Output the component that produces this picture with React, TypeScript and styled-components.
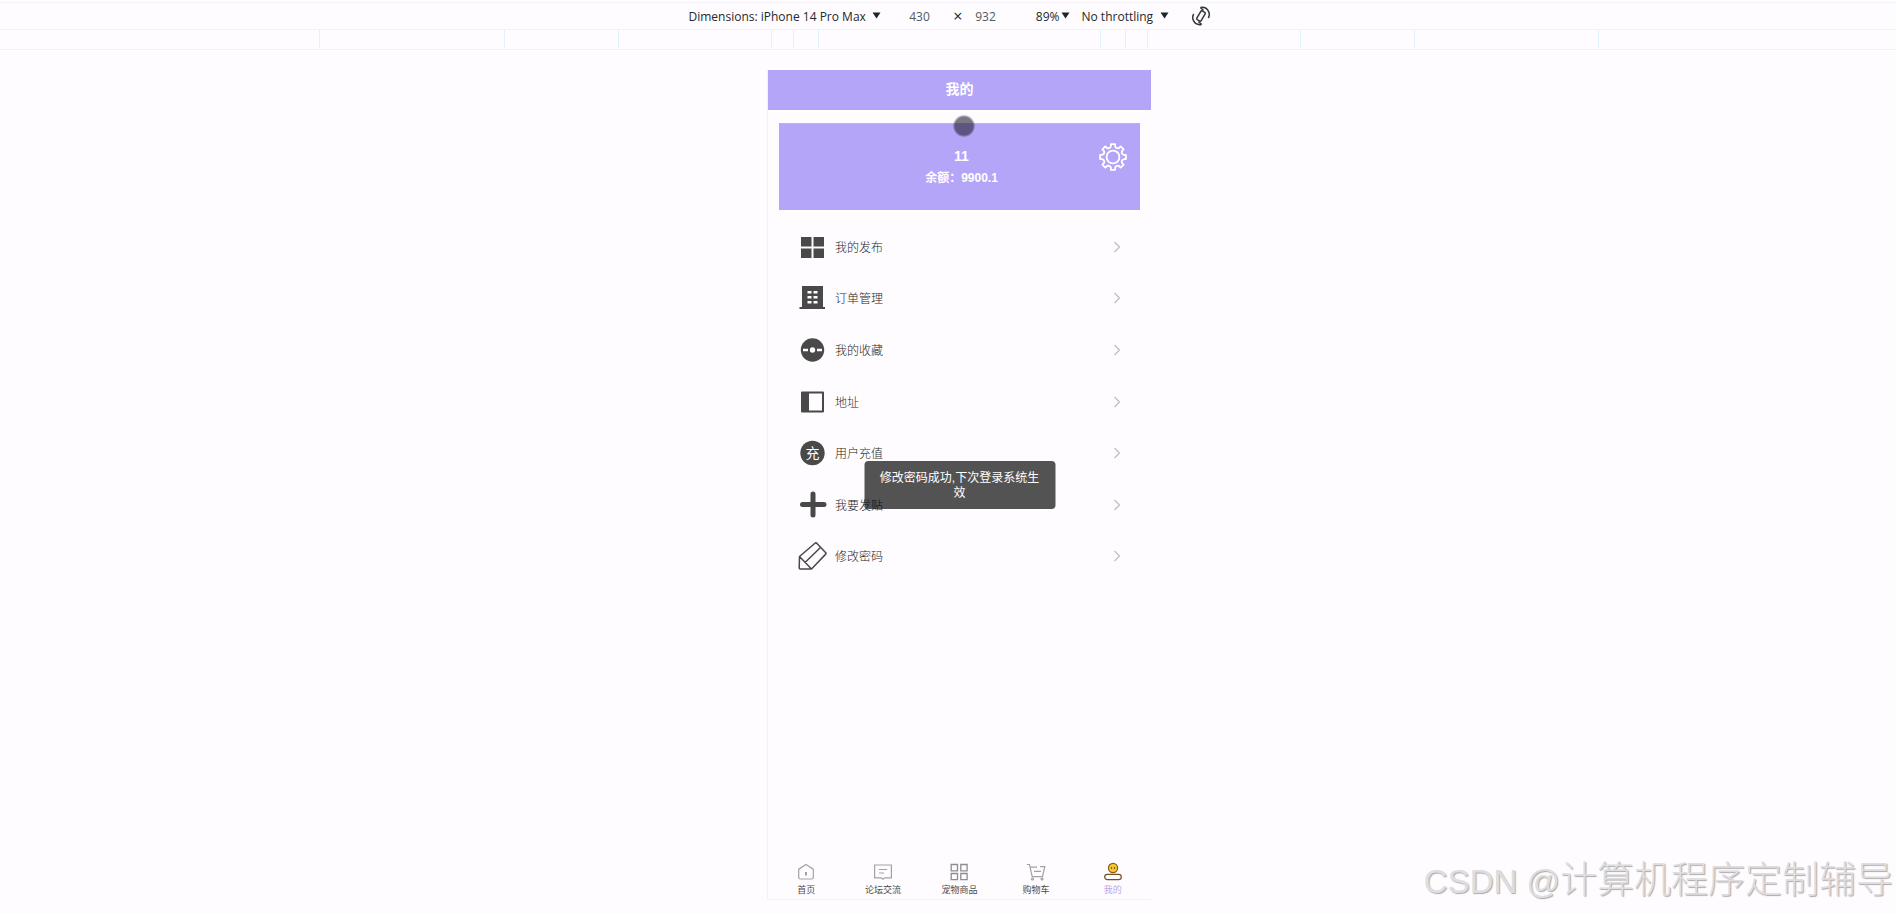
import React from "react";
import styled, { createGlobalStyle } from "styled-components";

const GlobalStyle = createGlobalStyle`
  * { box-sizing: border-box; }
  body {
    margin: 0;
    background: #fefcff;
    color: #4a4a4a;
    font-family: "Liberation Sans", "Noto Sans CJK SC", sans-serif;
    font-size: 12px;
  }
  a { color: inherit; text-decoration: none; }
`;

const Page = styled.div`
  position: relative;
  min-height: 100vh;
  padding-top: 2px;
  overflow: hidden;
`;

const Toolbar = styled.header`
  display: flex;
  align-items: center;
  justify-content: center;
  height: 28px;
  padding-left: 3px;
  border-top: 1px solid #f6f4f8;
  border-bottom: 1px solid #eaf4f8;
  font-family: "Open Sans", "Noto Sans", sans-serif;
  color: #24282c;
`;

const SelectBox = styled.label<{ $gap: number }>`
  display: flex;
  align-items: center;
  gap: 1px;
  margin-right: ${(p) => p.$gap}px;
`;

const Select = styled.select<{ $width: number }>`
  appearance: none;
  width: ${(p) => p.$width}px;
  padding: 0;
  border: 0;
  background: transparent;
  color: inherit;
  font: inherit;
`;

const SizeInput = styled.input`
  width: 46px;
  padding: 0;
  border: 0;
  background: transparent;
  color: #55585c;
  font: inherit;
  text-align: center;
`;

const Times = styled.span`
  width: 20px;
  font-size: 16px;
  line-height: 16px;
  text-align: right;
`;

const RotateButton = styled.button`
  display: flex;
  padding: 0;
  border: 0;
  background: transparent;
  color: #33363a;
`;

const Ruler = styled.div`
  display: flex;
  justify-content: center;
  height: 20px;
  padding: 0 0 1px 22px;
  border-bottom: 1px solid #eaf4f8;
`;

const RulerCell = styled.div<{ $width: number; $last?: boolean }>`
  flex: 0 0 ${(p) => p.$width}px;
  border-left: 1px solid #def3fc;
  border-right: ${(p) => (p.$last ? "1px solid #def3fc" : "0")};
`;

const Stage = styled.main`
  display: flex;
  justify-content: center;
  padding: 20px 0 14px 23px;
`;

const Phone = styled.section`
  position: relative;
  display: flex;
  flex-direction: column;
  width: 100%;
  max-width: 383px;
  min-height: calc(100vh - 84px);
  box-shadow: -1px 0 0 #f3f1f5;
  border-bottom: 1px solid #f3f1f5;
`;

const TitleBar = styled.h1`
  margin: 0;
  padding-bottom: 2px;
  background: #b5a5f8;
  color: #fff;
  font-size: 14px;
  line-height: 38px;
  text-align: center;
`;

const Card = styled.div`
  position: relative;
  margin: 13px 11px 11px;
  padding: 21px 0 21px 4px;
  border-top: 1px solid #bdb4dc;
  background: #b5a5f8;
  color: #fff;
  font-weight: 700;
  text-align: center;
`;

const UserName = styled.div`
  font-size: 14px;
  line-height: 22px;
`;

const Balance = styled.div`
  line-height: 22px;
`;

const SettingsButton = styled.button`
  position: absolute;
  top: 18px;
  right: 12px;
  display: flex;
  padding: 0;
  border: 0;
  background: transparent;
  color: #fff;
`;

const Menu = styled.nav`
  display: flex;
  flex-direction: column;
  height: 361px;
`;

const MenuItem = styled.a`
  flex: 1;
  display: flex;
  align-items: center;
  padding: 0 30px 0 29px;
`;

const MenuLabel = styled.span`
  flex: 1;
  margin-left: 8px;
  padding-bottom: 1px;
  color: #262626;
  font-weight: 300;
`;

const Toast = styled.div`
  position: absolute;
  top: 50%;
  left: 50%;
  width: 191px;
  padding: 10px 13px 8px;
  border-radius: 4px;
  transform: translate(-50%, -50%);
  background: rgba(0, 0, 0, 0.67);
  color: #fff;
  line-height: 15px;
  text-align: center;
  word-break: break-all;
`;

const TouchPoint = styled.div`
  position: absolute;
  top: 45px;
  left: 185px;
  width: 22px;
  height: 22px;
  border-radius: 50%;
  background: radial-gradient(circle closest-side, rgba(36, 30, 48, 0.6) 80%, rgba(36, 30, 48, 0.15) 100%);
`;

const TabBar = styled.nav`
  display: flex;
  margin-top: auto;
  padding-bottom: 2px;
`;

const Tab = styled.a<{ $active?: boolean }>`
  flex: 1;
  display: flex;
  flex-direction: column;
  align-items: center;
  gap: 1px;
  color: ${(p) => (p.$active ? "#b9abe6" : "#4a4a4a")};
  font-size: 9px;
  line-height: 14px;
`;

const Watermark = styled.div`
  position: absolute;
  right: 3px;
  bottom: 5px;
  color: #dedde0;
  font-size: 37px;
  font-weight: 300;
  line-height: 54px;
  text-shadow: 1px 1px 1px #aaa;
  white-space: nowrap;
`;

const WatermarkLatin = styled.span`
  font-size: 33px;
`;

const Caret = () => (
  <svg width="9" height="9" viewBox="0 0 9 9" aria-hidden="true">
    <path d="M0.5 0.5h8L4.5 6.5z" fill="#202428" />
  </svg>
);

const RotateIcon = () => (
  <svg width="20" height="20" viewBox="0 0 20 20" fill="none" stroke="currentColor" strokeWidth="1.5">
    <rect x="7.500" y="5" width="5" height="10" rx="1" transform="rotate(30 10 10)" />
    <path d="M9.500 1.500c3.500-.6 6.500.8 8 3.800 1.200 2.400 1 4.700-.2 6.700M10.500 18.500c-3.500.6-6.500-.8-8-3.800-1.200-2.400-1-4.700.2-6.700" />
    <path d="M9.500 1.500l3 3M10.500 18.500l-3-3" />
  </svg>
);

const gearPath = (() => {
  const points: string[] = [];
  for (let i = 0; i < 8; i++) {
    const a = (i * Math.PI) / 4;
    [
      [-0.3, 9.8],
      [-0.2, 10.8],
      [-0.16, 13.1],
      [0.16, 13.1],
      [0.2, 10.8],
      [0.3, 9.8],
    ].forEach(([d, r]) => {
      points.push(`${(14 + r * Math.sin(a + d)).toFixed(2)} ${(14 - r * Math.cos(a + d)).toFixed(2)}`);
    });
  }
  return `M${points.join("L")}Z`;
})();

const GearIcon = () => (
  <svg width="30" height="30" viewBox="-1 -1 30 30" fill="none" stroke="currentColor" strokeWidth="1.8" strokeLinejoin="round">
    <path d={gearPath} />
    <circle cx="14" cy="14" r="6.400" />
  </svg>
);

const Chevron = () => (
  <svg width="8" height="12" viewBox="0 0 8 12" fill="none" stroke="#bdbbc2" strokeWidth="1.200" aria-hidden="true">
    <path d="M1.500 1l5 5-5 5" />
  </svg>
);

const MenuSvg = ({ children }: { children: React.ReactNode }) => (
  <svg width="30" height="30" viewBox="0 0 30 30" fill="#494949" aria-hidden="true">
    {children}
  </svg>
);

const menu = [
  {
    label: "我的发布",
    icon: <path d="M4 5h10.500v9.500H4zM16.500 5h10.500v9.500H16.500zM4 16.500h10.500v9.500H4zM16.500 16.500h10.500v9.500H16.500z" />,
  },
  {
    label: "订单管理",
    icon: (
      <>
        <path d="M5 3h21v21h2v2H2.500v-2H5z" />
        <path d="M10.500 8h4v2.500h-4zM16.500 8h4v2.500h-4zM10.500 13h4v2.500h-4zM16.500 13h4v2.500h-4zM10.500 18h4v2.500h-4zM16.500 18h4v2.500h-4z" fill="#fefcff" />
      </>
    ),
  },
  {
    label: "我的收藏",
    icon: (
      <>
        <circle cx="15.500" cy="15" r="11.700" />
        <circle cx="15.500" cy="15" r="2.700" fill="#fefcff" />
        <path d="M6 13.800h5v2.400H6zM20 13.800h5v2.400h-5z" fill="#fefcff" />
      </>
    ),
  },
  {
    label: "地址",
    icon: <path fillRule="evenodd" d="M5 4.500h21a1 1 0 0 1 1 1v19a1 1 0 0 1-1 1H5a1 1 0 0 1-1-1v-19a1 1 0 0 1 1-1zM12 6.500v17h13v-17z" />,
  },
  {
    label: "用户充值",
    icon: (
      <>
        <circle cx="15.500" cy="15" r="12.200" />
        <text x="15.500" y="20" fontSize="14" textAnchor="middle" fill="#fefcff">
          充
        </text>
      </>
    ),
  },
  {
    label: "我要发贴",
    icon: <path d="M16 4v21M5.500 14.500h21.500" stroke="#494949" strokeWidth="5" strokeLinecap="round" />,
  },
  {
    label: "修改密码",
    icon: (
      <path
        d="M2.500 15.500L18 2.200q1-.8 2 .2l8.500 9q1 1 0 2L14.500 28H3.200q-1 0-1-1zM2.500 15.500L14.500 28M23.500 6.500L8 21.500"
        fill="none"
        stroke="#494949"
        strokeWidth="1.500"
        strokeLinejoin="round"
      />
    ),
  },
];

const TabSvg = ({ children }: { children: React.ReactNode }) => (
  <svg width="20" height="20" viewBox="0 0 20 20" fill="none" stroke="#a3a1a5" strokeWidth="1.200" aria-hidden="true">
    {children}
  </svg>
);

const tabs = [
  {
    label: "首页",
    icon: (
      <>
        <path d="M10 2.500l7.300 4.700v8.300q0 1.500-1.500 1.500H4.200q-1.500 0-1.500-1.500V7.200z" />
        <path d="M10 10v3.500" strokeWidth="2" />
      </>
    ),
  },
  {
    label: "论坛交流",
    icon: <path d="M1.600 3h16.800v12.800h-6.600L10 17.300l-1.800-1.500H1.600zM6 7.500h8M6 11h5" />,
  },
  {
    label: "宠物商品",
    icon: <path d="M2.200 2.500h6.300v6.300H2.200zM11.800 2.500h6.300v6.300h-6.300zM2.200 11.500h6.300v6.200H2.200zM11.800 11.500h6.300v6.200h-6.300z" stroke="#8f8d91" strokeWidth="1.300" />,
  },
  {
    label: "购物车",
    icon: (
      <>
        <path d="M.8 2.500h2.700l2.700 12.200h10.300L18.800 4.700H14M4 5.200h7M8 9.300h7" />
        <circle cx="6.500" cy="17" r="1" />
        <circle cx="16" cy="17" r="1" />
      </>
    ),
  },
  {
    label: "我的",
    icon: (
      <>
        <circle cx="10" cy="6" r="4.600" fill="#f8c82e" stroke="#87601c" />
        <path d="M8.500 5v2M11.500 5v2" stroke="#87601c" />
        <rect x="1.700" y="12.300" width="16.600" height="5.400" rx="2.700" fill="#fff" stroke="#75502a" />
      </>
    ),
  },
];

export default function App() {
  return (
    <>
      <GlobalStyle />
      <Page>
        <Toolbar>
          <SelectBox $gap={16}>
            <Select $width={182} aria-label="Device" defaultValue="device">
              <option value="device">Dimensions: iPhone 14 Pro Max</option>
            </Select>
            <Caret />
          </SelectBox>
          <SizeInput aria-label="Width" defaultValue="430" />
          <Times>×</Times>
          <SizeInput aria-label="Height" defaultValue="932" />
          <SelectBox $gap={12}>
            <Select $width={51} aria-label="Zoom" defaultValue="89" dir="rtl">
              <option value="89">&lrm;89%&lrm;</option>
            </Select>
            <Caret />
          </SelectBox>
          <SelectBox $gap={22}>
            <Select $width={77} aria-label="Throttling" defaultValue="none">
              <option value="none">No throttling</option>
            </Select>
            <Caret />
          </SelectBox>
          <RotateButton type="button" aria-label="Rotate">
            <RotateIcon />
          </RotateButton>
        </Toolbar>
        <Ruler aria-hidden="true">
          <RulerCell $width={185} />
          <RulerCell $width={114} />
          <RulerCell $width={153} />
          <RulerCell $width={22} />
          <RulerCell $width={25} />
          <RulerCell $width={282} />
          <RulerCell $width={25} />
          <RulerCell $width={22} />
          <RulerCell $width={153} />
          <RulerCell $width={114} />
          <RulerCell $width={185} $last />
        </Ruler>
        <Stage>
          <Phone>
            <TitleBar>我的</TitleBar>
            <Card>
              <UserName>11</UserName>
              <Balance>余额：9900.1</Balance>
              <SettingsButton type="button" aria-label="设置">
                <GearIcon />
              </SettingsButton>
            </Card>
            <Menu>
              {menu.map((item) => (
                <MenuItem href="#" key={item.label}>
                  <MenuSvg>{item.icon}</MenuSvg>
                  <MenuLabel>{item.label}</MenuLabel>
                  <Chevron />
                </MenuItem>
              ))}
            </Menu>
            <TabBar>
              {tabs.map((tab, i) => (
                <Tab href="#" key={tab.label} $active={i === tabs.length - 1}>
                  <TabSvg>{tab.icon}</TabSvg>
                  {tab.label}
                </Tab>
              ))}
            </TabBar>
            <TouchPoint />
            <Toast role="status">修改密码成功,下次登录系统生效</Toast>
          </Phone>
        </Stage>
        <Watermark>
          <WatermarkLatin>CSDN @</WatermarkLatin>计算机程序定制辅导
        </Watermark>
      </Page>
    </>
  );
}
